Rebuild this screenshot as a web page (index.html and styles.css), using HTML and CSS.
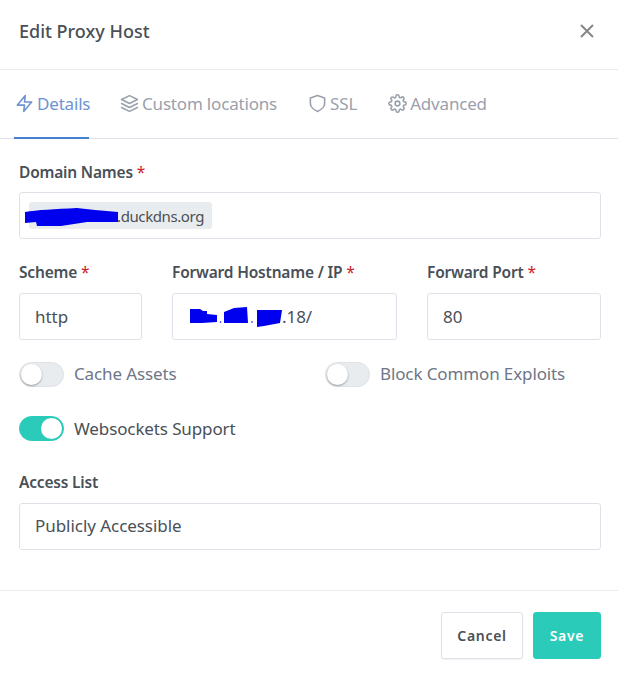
FILE: index.html
```html
<!DOCTYPE html>
<html lang="en">
<head>
<meta charset="utf-8">
<title>Edit Proxy Host</title>
<link rel="stylesheet" href="styles.css">
</head>
<body>
<div class="modal">
  <header class="modal-header">
    <h1 class="modal-title">Edit Proxy Host</h1>
    <svg class="close" viewBox="0 0 16 16" width="16" height="16"><path d="M2 2 14 14M14 2 2 14"/></svg>
  </header>
  <nav class="tabs">
    <a class="tab active">
      <svg class="icon" viewBox="0 0 24 24"><path d="M13 2 3 14h9l-1 8 10-12h-9l1-8z"/></svg>Details
    </a>
    <a class="tab">
      <svg class="icon" viewBox="0 0 24 24"><path d="M12 2 2 7l10 5 10-5-10-5z"/><path d="M2 17l10 5 10-5"/><path d="M2 12l10 5 10-5"/></svg>Custom locations
    </a>
    <a class="tab">
      <svg class="icon" viewBox="0 0 24 24"><path d="M12 22s9-4 9-10V5l-9-3-9 3v7c0 6 9 10 9 10z"/></svg>SSL
    </a>
    <a class="tab">
      <svg class="icon" viewBox="0 0 24 24"><circle cx="12" cy="12" r="3"/><path d="M19.4 15a1.65 1.65 0 0 0 .33 1.82l.06.06a2 2 0 1 1-2.83 2.83l-.06-.06a1.65 1.65 0 0 0-2.82 1.17V21a2 2 0 1 1-4 0v-.09A1.65 1.65 0 0 0 7.2 19.7l-.06.06a2 2 0 1 1-2.83-2.83l.06-.06a1.65 1.65 0 0 0-1.17-2.82H3a2 2 0 1 1 0-4h.09A1.65 1.65 0 0 0 4.3 7.2l-.06-.06a2 2 0 1 1 2.83-2.83l.06.06a1.65 1.65 0 0 0 2.82-1.17V3a2 2 0 1 1 4 0v.09a1.65 1.65 0 0 0 2.82 1.17l.06-.06a2 2 0 1 1 2.83 2.83l-.06.06a1.65 1.65 0 0 0 1.17 2.82H21a2 2 0 1 1 0 4h-.09a1.65 1.65 0 0 0-1.51 1z"/></svg>Advanced
    </a>
  </nav>
  <main class="modal-body">
    <div class="field domain">
      <label class="label">Domain Names <span class="req">*</span></label>
      <div class="input chips">
        <span class="chip">
          <svg class="scribble scribble-domain" viewBox="0 0 94 18" width="94" height="18"><path d="M0 4 C12 2 30 1 52 0 L70 2 L93 4 L93 14 L62 14 L36 18 L12 18 L11 14 L0 15 Z"/></svg>.duckdns.org
        </span>
      </div>
    </div>
    <div class="grid-3">
      <div class="field">
        <label class="label">Scheme <span class="req">*</span></label>
        <div class="input">http</div>
      </div>
      <div class="field">
        <label class="label">Forward Hostname / IP <span class="req">*</span></label>
        <div class="input host">
          <svg class="scribble scribble-host" viewBox="0 0 92 20" width="92" height="20"><path d="M0 2 L10 2 L13 4 L17 4 L17 7 L27 8 L27 15 L12 16 L0 16 Z"/><circle cx="30.500" cy="15" r="0.800"/><path d="M34 5 L44 1 L57 0 L58 16 L34 16 Z"/><circle cx="62" cy="15" r="0.800"/><path d="M67 3 L92 3 L90 16 L74 19 L67 20 Z"/></svg><span>.18/</span>
        </div>
      </div>
      <div class="field">
        <label class="label">Forward Port <span class="req">*</span></label>
        <div class="input">80</div>
      </div>
    </div>
    <div class="grid-2">
      <label class="switch"><span class="track"><span class="knob"></span></span><span class="switch-text">Cache Assets</span></label>
      <label class="switch"><span class="track"><span class="knob"></span></span><span class="switch-text">Block Common Exploits</span></label>
    </div>
    <label class="switch ws"><span class="track on"><span class="knob"></span></span><span class="switch-text">Websockets Support</span></label>
    <div class="field access">
      <label class="label">Access List</label>
      <div class="input access-input">Publicly Accessible</div>
    </div>
  </main>
  <footer class="modal-footer">
    <button class="btn cancel">Cancel</button>
    <button class="btn save">Save</button>
  </footer>
</div>
</body>
</html>
```
FILE: styles.css
```css
* { box-sizing: border-box; }
html, body { margin: 0; padding: 0; background: #fff; }
body {
  font-family: "Noto Sans", "Open Sans", sans-serif;
  font-size: 16px;
  color: #495057;
}
.modal { width: 618px; height: 678px; display: flex; flex-direction: column; }
.modal-header {
  height: 70px;
  padding: 0 23px 8px 19px;
  display: flex;
  align-items: center;
  justify-content: space-between;
  border-bottom: 1px solid #e9ecef;
}
.modal-title { margin: 0; font-size: 18px; font-weight: 500; color: #495057; letter-spacing: 0; }
.close { fill: none; stroke: #868686; stroke-width: 2; display: block; }
.tabs {
  height: 69px;
  padding-left: 14px;
  display: flex;
  border-bottom: 1px solid #dee2e8;
  gap: 31px;
}
.tab {
  height: 69px;
  display: flex;
  align-items: center;
  color: #9aa0ac;
  font-size: 17px;
  letter-spacing: -0.18px;
  border-bottom: 2px solid transparent;
}
.tab.active { color: #6e92d4; border-bottom-color: #467fcf; width: 75px; padding-left: 1px; }
.icon { width: 19px; height: 19px; margin-right: 3px; fill: none; stroke: currentColor; stroke-width: 2; stroke-linecap: round; stroke-linejoin: round; flex: none; }
.modal-body { flex: 1; padding: 0 17px 0 19px; }
.field { display: block; }
.label { display: block; height: 20px; line-height: 20px; font-size: 15.500px; font-weight: 600; color: #495057; letter-spacing: -0.19px; margin-bottom: 10px; white-space: nowrap; }
.domain { padding-top: 23px; }
.grid-3 .label, .access .label { margin-bottom: 11px; }
.req { color: #cd201f; font-weight: 400; }
.input {
  height: 47px;
  border: 1px solid #dee2e8;
  border-radius: 3px;
  display: flex;
  align-items: center;
  padding: 0 15px 1px;
  font-size: 17px;
  letter-spacing: -0.05px;
  color: #495057;
  background: #fff;
  white-space: nowrap;
}
.access-input { padding-bottom: 3px; }
.chips { padding: 0 0 0 9px; }
.chip {
  position: relative;
  display: flex;
  align-items: center;
  justify-content: flex-end;
  width: 183px;
  height: 27px;
  padding-right: 8px;
  border-radius: 3px;
  background: #e9ecef;
  font-size: 15px;
  letter-spacing: -0.4px;
}
.scribble { fill: #0000ee; flex: none; }
.scribble-domain { position: absolute; left: -4px; top: 6px; }
.scribble-host { margin-top: 2px; }
.host { padding-left: 17px; }
.grid-3 { display: grid; grid-template-columns: 123px 225px 174px; column-gap: 30px; margin-top: 23px; }
.grid-2 { display: grid; grid-template-columns: 276px 276px; column-gap: 30px; margin-top: 22px; }
.switch { display: flex; align-items: center; height: 25px; }
.ws { margin-top: 29px; }
.track {
  width: 45px;
  height: 25px;
  border: 1px solid #dee2e8;
  border-radius: 13px;
  background: #e9ecef;
  position: relative;
  flex: none;
}
.knob {
  position: absolute;
  left: 1px;
  top: 1px;
  width: 21px;
  height: 21px;
  border-radius: 50%;
  background: #fff;
  box-shadow: 0 1px 2px rgba(0, 0, 0, .35);
}
.track.on { background: #2bcbba; border-color: #2bcbba; }
.track.on .knob { left: 21px; box-shadow: none; }
.switch-text { margin-left: 10px; padding-bottom: 3px; font-size: 17px; color: #6e7687; letter-spacing: -0.12px; }
.ws .switch-text { color: #495057; padding-bottom: 1px; }
.access { margin-top: 31px; }
.modal-footer {
  height: 88px;
  border-top: 1px solid #e9ecef;
  padding: 21px 17px 0 0;
  display: flex;
  justify-content: flex-end;
  gap: 10px;
}
.btn {
  height: 47px;
  border-radius: 3px;
  font-family: inherit;
  font-size: 14px;
  font-weight: 600;
  letter-spacing: 0.7px;
  cursor: pointer;
}
.cancel { width: 82px; background: #fff; border: 1px solid #dee2e8; color: #495057; box-shadow: 0 1px 1px rgba(0,0,0,.05); }
.save { width: 68px; background: #2bcbba; border: 1px solid #2bcbba; color: #fff; }
```
